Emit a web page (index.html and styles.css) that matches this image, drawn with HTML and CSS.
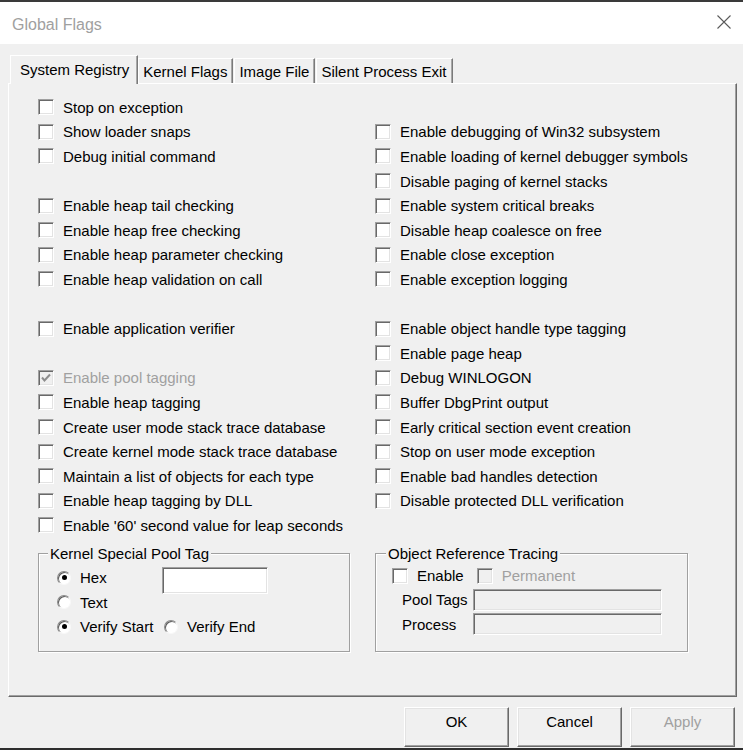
FILE: index.html
```html
<!DOCTYPE html>
<html>
<head>
<meta charset="utf-8">
<title>Global Flags</title>
<link rel="stylesheet" href="styles.css">
</head>
<body>
<div class="window">
  <div class="titlebar">
    <span class="title">Global Flags</span>
    <svg class="close" width="14" height="14" viewBox="0 0 14 14"><path d="M0.5 0.5 L13.5 13.5 M13.5 0.5 L0.5 13.5" stroke="#5a5a5a" stroke-width="1.1" fill="none"/></svg>
  </div>
  <div class="client">
    <div class="tabs">
      <div class="tab active">System Registry</div>
      <div class="tab">Kernel Flags</div>
      <div class="tab">Image File</div>
      <div class="tab">Silent Process Exit</div>
    </div>
    <div class="panel">
      <div class="flags">
        <label class="item"><span class="cb"></span>Stop on exception</label>
        <label class="item"><span class="cb"></span>Show loader snaps</label>
        <label class="item"><span class="cb"></span>Debug initial command</label>
        <div class="gap"></div>
        <label class="item"><span class="cb"></span>Enable heap tail checking</label>
        <label class="item"><span class="cb"></span>Enable heap free checking</label>
        <label class="item"><span class="cb"></span>Enable heap parameter checking</label>
        <label class="item"><span class="cb"></span>Enable heap validation on call</label>
        <div class="gap"></div>
        <label class="item"><span class="cb"></span>Enable application verifier</label>
        <div class="gap"></div>
        <label class="item disabled"><span class="cb checked"><svg width="12" height="12" viewBox="0 0 12 12"><path d="M2 5.5 L4.5 8.5 L10 2.5" stroke="#8d8d8d" stroke-width="2" fill="none"/></svg></span>Enable pool tagging</label>
        <label class="item"><span class="cb"></span>Enable heap tagging</label>
        <label class="item"><span class="cb"></span>Create user mode stack trace database</label>
        <label class="item"><span class="cb"></span>Create kernel mode stack trace database</label>
        <label class="item"><span class="cb"></span>Maintain a list of objects for each type</label>
        <label class="item"><span class="cb"></span>Enable heap tagging by DLL</label>
        <label class="item"><span class="cb"></span>Enable '60' second value for leap seconds</label>

        <div class="gap"></div>
        <label class="item"><span class="cb"></span>Enable debugging of Win32 subsystem</label>
        <label class="item"><span class="cb"></span>Enable loading of kernel debugger symbols</label>
        <label class="item"><span class="cb"></span>Disable paging of kernel stacks</label>
        <label class="item"><span class="cb"></span>Enable system critical breaks</label>
        <label class="item"><span class="cb"></span>Disable heap coalesce on free</label>
        <label class="item"><span class="cb"></span>Enable close exception</label>
        <label class="item"><span class="cb"></span>Enable exception logging</label>
        <div class="gap"></div>
        <label class="item"><span class="cb"></span>Enable object handle type tagging</label>
        <label class="item"><span class="cb"></span>Enable page heap</label>
        <label class="item"><span class="cb"></span>Debug WINLOGON</label>
        <label class="item"><span class="cb"></span>Buffer DbgPrint output</label>
        <label class="item"><span class="cb"></span>Early critical section event creation</label>
        <label class="item"><span class="cb"></span>Stop on user mode exception</label>
        <label class="item"><span class="cb"></span>Enable bad handles detection</label>
        <label class="item"><span class="cb"></span>Disable protected DLL verification</label>
      </div>
      <div class="groups">
        <fieldset class="group pooltag">
          <legend>Kernel Special Pool Tag</legend>
          <div class="pt-grid">
            <label class="item r1"><span class="rb on"></span>Hex</label>
            <span class="field tagbox"></span>
            <label class="item r2"><span class="rb"></span>Text</label>
            <label class="item r3"><span class="rb on"></span>Verify Start</label>
            <label class="item r3b"><span class="rb"></span>Verify End</label>
          </div>
        </fieldset>
        <fieldset class="group objref">
          <legend>Object Reference Tracing</legend>
          <div class="or-row">
            <label class="item"><span class="cb"></span>Enable</label>
            <label class="item disabled perm"><span class="cb grey"></span>Permanent</label>
          </div>
          <div class="or-grid">
            <span class="lbl">Pool Tags</span><span class="field off"></span>
            <span class="lbl">Process</span><span class="field off"></span>
          </div>
        </fieldset>
      </div>
    </div>
    <div class="buttons">
      <button class="btn">OK</button>
      <button class="btn">Cancel</button>
      <button class="btn dim">Apply</button>
    </div>
  </div>
</div>
</body>
</html>
```
FILE: styles.css
```css
* { box-sizing: border-box; }
html, body { margin: 0; padding: 0; }
body {
  width: 743px;
  height: 750px;
  overflow: hidden;
  font-family: "Liberation Sans", Arial, sans-serif;
  font-size: 15px;
  color: #000;
  background: #f0f0f0;
}
.window {
  width: 743px;
  height: 750px;
  display: flex;
  flex-direction: column;
}
.titlebar {
  height: 44px;
  background: #fff;
  border-top: 2px solid #3a3a3a;
  display: flex;
  align-items: center;
  justify-content: space-between;
  padding: 0 12px 0 12px;
}
.title {
  font-size: 16px;
  color: #a0a0a0;
  margin-top: 3px;
}
.close { margin-right: 0; margin-top: -2px; }
.client {
  flex: 1;
  display: flex;
  flex-direction: column;
  background: #f0f0f0;
  padding-top: 11px;
  border-bottom: 2px solid #2e2e2e;
}
.tabs {
  display: flex;
  align-items: flex-end;
  height: 28px;
  margin-left: 10px;
  position: relative;
  z-index: 2;
}
.tab {
  height: 25px;
  padding: 0 5px 0 4px;
  font-size: 15px;
  line-height: 25px;
  border-top: 1px solid #fff;
  border-left: 1px solid #fff;
  border-right: 1px solid #7a7a7a;
  box-shadow: inset -1px 0 0 #a8a8a8;
  background: #f0f0f0;
  margin-right: 1px;
  white-space: nowrap;
}
.tab.active {
  height: 29px;
  margin-bottom: -1px;
  padding: 0 8px 0 9px;
  line-height: 28px;
  margin-right: 0;
}
.panel {
  margin: 0 6px 0 8px;
  height: 614px;
  border-top: 1px solid #fff;
  border-left: 1px solid #fff;
  border-right: 1px solid #6a6a6a;
  border-bottom: 1px solid #6a6a6a;
  box-shadow: inset -1px -1px 0 #a0a0a0;
  padding: 11px 0 0 29px;
}
.flags {
  display: grid;
  grid-template-columns: 337px 1fr;
  grid-template-rows: repeat(18, 24.6px);
  grid-auto-flow: column;
}
.item {
  display: flex;
  align-items: center;
  white-space: nowrap;
}
.cb {
  width: 16px;
  height: 16px;
  flex: none;
  margin-right: 9px;
  background: #fff;
  border-top: 1px solid #a0a0a0;
  border-left: 1px solid #a0a0a0;
  border-right: 1px solid #fff;
  border-bottom: 1px solid #fff;
  box-shadow: inset 1px 1px 0 #696969, inset -1px -1px 0 #e3e3e3;
  display: flex;
  align-items: center;
  justify-content: center;
}
.cb.checked, .cb.grey { background: #f0f0f0; }
.disabled { color: #a0a0a0; }
.groups {
  display: flex;
  margin-top: 7px;
}
.group {
  margin: 0;
  height: 107px;
  border: 1px solid #a0a0a0;
  box-shadow: inset 1px 1px 0 #fff, 1px 1px 0 #fff;
}
.group legend {
  padding: 0 2px;
  line-height: 17px;
  background: #f0f0f0;
}
.pooltag {
  width: 312px;
  margin-right: 25px;
  padding: 4px 0 0 18px;
}
.pooltag legend { margin-left: -9px; }
.objref {
  width: 313px;
  padding: 2px 0 0 16px;
}
.objref legend { margin-left: -6px; }
.pt-grid {
  display: grid;
  grid-template-columns: 105px 1fr;
  grid-template-rows: repeat(3, 24.5px);
}
.r1 { grid-column: 1; grid-row: 1; }
.r2 { grid-column: 1; grid-row: 2; }
.r3 { grid-column: 1; grid-row: 3; }
.r3b { grid-column: 2; grid-row: 3; margin-left: 2px; }
.tagbox {
  grid-column: 2;
  grid-row: 1 / span 2;
  width: 106px;
  height: 27px;
  margin-top: 1px;
}
.rb {
  width: 14px;
  height: 14px;
  flex: none;
  border-radius: 50%;
  margin-right: 9px;
  background: #fff;
  border: 1px solid;
  border-color: #8a8a8a #f8f8f8 #f8f8f8 #8a8a8a;
  box-shadow: inset 1px 1px 0 #5a5a5a;
  display: flex;
  align-items: center;
  justify-content: center;
}
.rb.on::after {
  content: "";
  width: 5px;
  height: 5px;
  border-radius: 50%;
  background: #000;
}
.field {
  display: block;
  background: #fff;
  border-top: 1px solid #a0a0a0;
  border-left: 1px solid #a0a0a0;
  border-right: 1px solid #fff;
  border-bottom: 1px solid #fff;
  box-shadow: inset 1px 1px 0 #696969, inset -1px -1px 0 #e3e3e3;
}
.field.off { background: #f0f0f0; height: 22px; width: 189px; }
.or-row {
  display: flex;
  height: 24px;
}
.perm { margin-left: 13px; }
.or-grid {
  display: grid;
  grid-template-columns: 71px 189px;
  grid-template-rows: 24.5px 24.5px;
  align-items: center;
  margin-left: 10px;
}
.lbl { white-space: nowrap; }
.buttons {
  display: flex;
  justify-content: flex-end;
  gap: 8px;
  margin: 10px 8px 1px 0;
}
.btn {
  width: 105px;
  height: 40px;
  font-family: "Liberation Sans", Arial, sans-serif;
  font-size: 15px;
  color: #000;
  background: #f0f0f0;
  border-top: 1px solid #fff;
  border-left: 1px solid #fff;
  border-right: 1px solid #696969;
  border-bottom: 1px solid #696969;
  box-shadow: inset -1px -1px 0 #a0a0a0, inset 1px 1px 0 #e3e3e3;
  padding: 0 0 12px 0;
}
.btn.dim { color: #a0a0a0; }
```
